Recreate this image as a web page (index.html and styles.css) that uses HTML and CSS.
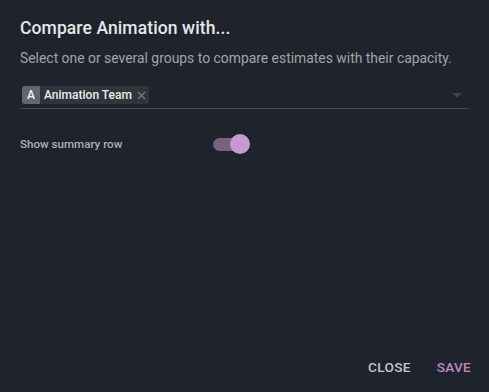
FILE: index.html
```html
<!DOCTYPE html>
<html lang="en">
<head>
    <meta charset="UTF-8">
    <meta name="viewport" content="width=device-width, initial-scale=1.0">
    <title>Compare Animation with...</title>
    <link rel="stylesheet" href="styles.css">
</head>
<body>

    <div class="dialog">
        <div class="dialog-body">
            <h1 class="title">Compare Animation with...</h1>
            <p class="subtitle">Select one or several groups to compare estimates with their capacity.</p>

            <!-- Select field with chips -->
            <div class="select">
                <div class="chips">
                    <span class="chip">
                        <span class="chip-avatar">A</span>
                        <span class="chip-label">Animation Team</span>
                        <span class="chip-close">
                            <svg width="9" height="9" viewBox="0 0 10 10"><path d="M1 1 L9 9 M9 1 L1 9" stroke="currentColor" stroke-width="1.4"/></svg>
                        </span>
                    </span>
                </div>
                <span class="select-arrow"></span>
            </div>

            <!-- Summary row switch -->
            <div class="switch-row">
                <span class="switch-label">Show summary row</span>
                <span class="switch">
                    <span class="switch-track"></span>
                    <span class="switch-thumb"></span>
                </span>
            </div>
        </div>

        <div class="dialog-actions">
            <button class="btn btn-close">Close</button>
            <button class="btn btn-save">Save</button>
        </div>
    </div>

</body>
</html>
```

FILE: styles.css
```css
body {
    margin: 0;
    background: #1f232b;
    font-family: Roboto, 'Noto Sans', sans-serif;
    color: #e8e9eb;
}

.dialog {
    width: 489px;
    height: 392px;
    display: flex;
    flex-direction: column;
    justify-content: space-between;
    box-sizing: border-box;
}

.dialog-body {
    padding: 16px 20px 0 20px;
}

.title {
    font-size: 17.5px;
    font-weight: 500;
    margin: 0;
    line-height: 24px;
    letter-spacing: 0.1px;
    color: #e6e7e9;
}

.subtitle {
    font-size: 13.9px;
    margin: 8px 0 0 0;
    line-height: 20px;
    color: #a2a4a8;
}

/* Select */
.select {
    margin-top: 17px;
    height: 24px;
    display: flex;
    align-items: center;
    justify-content: space-between;
    border-bottom: 1px solid #43474e;
    box-sizing: border-box;
}

.chips {
    display: flex;
    align-items: flex-start;
    height: 100%;
    padding-left: 2px;
}

.chip {
    display: flex;
    align-items: center;
    height: 18px;
    background: #30343b;
    border-radius: 3px;
    overflow: hidden;
    margin-top: 1px;
}

.chip-avatar {
    width: 18px;
    height: 18px;
    background: #62666d;
    color: #f0f0f0;
    font-size: 12px;
    font-weight: 500;
    display: flex;
    align-items: center;
    justify-content: center;
}

.chip-label {
    font-size: 12px;
    font-weight: 500;
    color: #eceded;
    padding-left: 4px;
}

.chip-close {
    color: #7f8287;
    display: flex;
    align-items: center;
    padding: 0 3px 0 5px;
}

.select-arrow {
    width: 0;
    height: 0;
    border-left: 5px solid transparent;
    border-right: 5px solid transparent;
    border-top: 5px solid #3f434a;
    margin-right: 7px;
    margin-bottom: 2px;
}

/* Switch */
.switch-row {
    display: flex;
    align-items: center;
    margin-top: 25px;
    height: 20px;
}

.switch-label {
    font-size: 11.6px;
    font-weight: 500;
    color: #aeb0b4;
    width: 193px;
}

.switch {
    position: relative;
    width: 37px;
    height: 20px;
}

.switch-track {
    position: absolute;
    left: 0;
    top: 4px;
    width: 30px;
    height: 13px;
    border-radius: 7px;
    background: #78607f;
}

.switch-thumb {
    position: absolute;
    left: 17px;
    top: 0;
    width: 20px;
    height: 20px;
    border-radius: 50%;
    background: #c799d2;
}

/* Actions */
.dialog-actions {
    display: flex;
    justify-content: flex-end;
    gap: 26px;
    padding: 0 18px 17px 0;
}

.btn {
    background: none;
    border: none;
    padding: 0;
    font-family: Roboto, 'Noto Sans', sans-serif;
    font-size: 13.6px;
    font-weight: 500;
    text-transform: uppercase;
    letter-spacing: 0.3px;
    line-height: 16px;
    cursor: pointer;
}

.btn-close {
    color: #c4c6c9;
}

.btn-save {
    color: #b98ac5;
}
```
